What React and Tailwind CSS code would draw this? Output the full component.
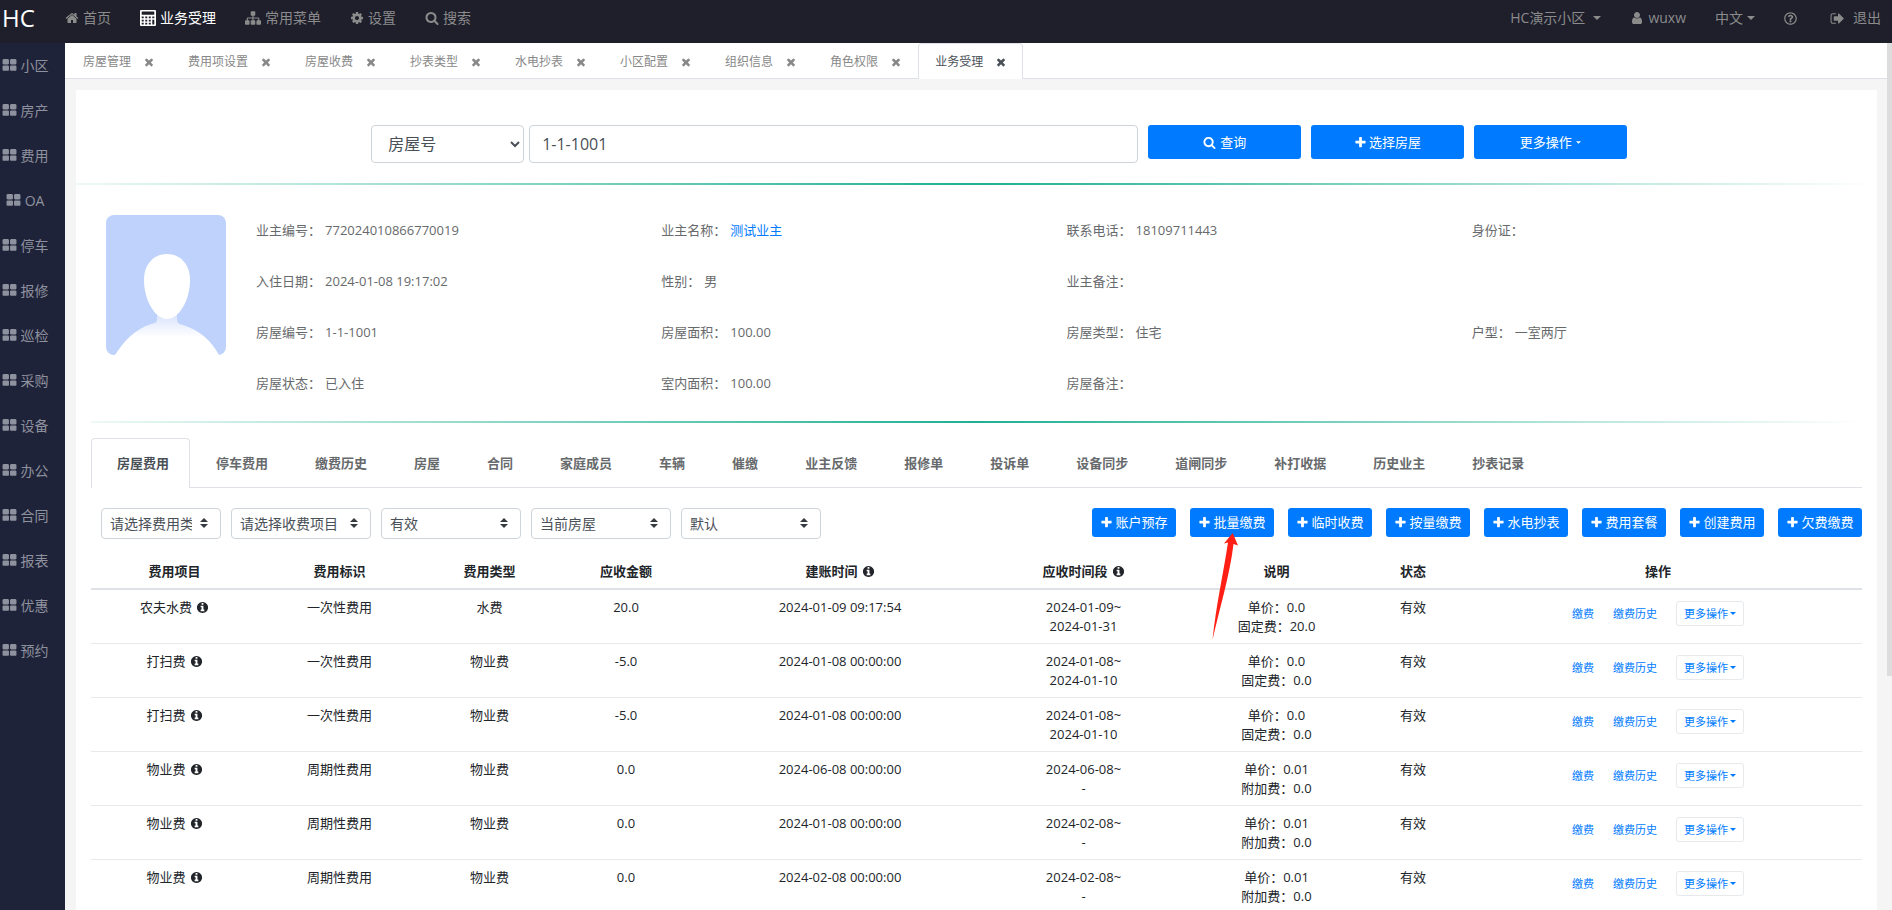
import { FaRegQuestionCircle } from 'react-icons/fa';

const iconPaths = {
  home: 'M1472 992v480q0 26-19 45t-45 19h-384v-384h-256v384h-384q-26 0-45-19t-19-45v-480q0-1 .5-3t.5-3l575-474 575 474q1 2 1 6zm223-69l-62 74q-8 9-21 11h-3q-13 0-21-7l-692-577-692 577q-12 8-24 7-13-2-21-11l-62-74q-8-10-7-23.5t11-21.5l719-599q32-26 76-26t76 26l244 204v-195q0-14 9-23t23-9h192q14 0 23 9t9 23v408l219 182q10 8 11 21.5t-7 23.5z',
  calculator:
    'M128 0h1536q52 0 90 38t38 90v1536q0 52-38 90t-90 38h-1536q-52 0-90-38t-38-90v-1536q0-52 38-90t90-38zM192 160v384h1408v-384zM192 736v192h224v-192zM588 736v192h224v-192zM984 736v192h224v-192zM1376 736v192h224v-192zM192 1088v192h224v-192zM588 1088v192h224v-192zM984 1088v192h224v-192zM1376 1088v544h224v-544zM192 1440v192h224v-192zM588 1440v192h224v-192zM984 1440v192h224v-192z',
  sitemap:
    'M1792 1248v320q0 40-28 68t-68 28h-320q-40 0-68-28t-28-68v-320q0-40 28-68t68-28h96v-192h-512v192h96q40 0 68 28t28 68v320q0 40-28 68t-68 28h-320q-40 0-68-28t-28-68v-320q0-40 28-68t68-28h96v-192h-512v192h96q40 0 68 28t28 68v320q0 40-28 68t-68 28h-320q-40 0-68-28t-28-68v-320q0-40 28-68t68-28h96v-192q0-52 38-90t90-38h512v-192h-96q-40 0-68-28t-28-68v-320q0-40 28-68t68-28h320q40 0 68 28t28 68v320q0 40-28 68t-68 28h-96v192h512q52 0 90 38t38 90v192h96q40 0 68 28t28 68z',
  cog: 'M1152 896q0-106-75-181t-181-75-181 75-75 181 75 181 181 75 181-75 75-181zm512-109v222q0 12-8 23t-20 13l-185 28q-19 54-39 91 35 50 107 138 10 12 10 25t-9 23q-27 37-99 108t-94 71q-12 0-26-9l-138-108q-44 23-91 38-16 136-29 186-7 28-36 28h-222q-14 0-24.5-8.5t-11.5-21.5l-28-184q-49-16-90-37l-141 107q-10 9-25 9-14 0-25-11-126-114-165-168-7-10-7-23 0-12 8-23 15-21 51-66.5t54-70.5q-27-50-41-99l-183-27q-13-2-21-12.5t-8-23.5v-222q0-12 8-23t19-13l186-28q14-46 39-92-40-57-107-138-10-12-10-24 0-10 9-23 26-36 98.5-107.5t94.5-71.5q13 0 26 10l138 107q44-23 91-38 16-136 29-186 7-28 36-28h222q14 0 24.5 8.5t11.5 21.5l28 184q49 16 90 37l142-107q9-9 24-9 13 0 25 10 129 119 165 170 7 8 7 22 0 12-8 23-15 21-51 66.5t-54 70.5q26 50 41 98l183 28q13 2 21 12.5t8 23.5z',
  search:
    'M1216 832q0-185-131.5-316.5t-316.5-131.5-316.5 131.5-131.5 316.5 131.5 316.5 316.5 131.5 316.5-131.5 131.5-316.5zm512 832q0 52-38 90t-90 38q-54 0-90-38l-343-342q-179 124-399 124-143 0-273.5-55.5t-225-150-150-225-55.5-273.5 55.5-273.5 150-225 225-150 273.5-55.5 273.5 55.5 225 150 150 225 55.5 273.5q0 220-124 399l343 343q37 37 37 90z',
  user: 'M1536 1399q0 109-62.5 187t-150.5 78h-854q-88 0-150.5-78t-62.5-187q0-85 8.5-160.5t31.5-152 58.5-131 94-89 134.5-34.5q131 128 313 128t313-128q76 0 134.5 34.5t94 89 58.5 131 31.5 152 8.5 160.5zm-256-887q0 159-112.5 271.5t-271.5 112.5-271.5-112.5-112.5-271.5 112.5-271.5 271.5-112.5 271.5 112.5 112.5 271.5z',
  signOut:
    'M704 1440q0 4 1 20t.5 26.5-3 23.5-10 19.5-20.5 6.5h-320q-119 0-203.5-84.5t-84.5-203.5v-704q0-119 84.5-203.5t203.5-84.5h320q13 0 22.5 9.5t9.5 22.5q0 4 1 20t.5 26.5-3 23.5-10 19.5-20.5 6.5h-320q-66 0-113 47t-47 113v704q0 66 47 113t113 47h312l11.5 1 11.5 3 8 5.5 7 9 2 13.5zm928-544q0 26-19 45l-544 544q-19 19-45 19t-45-19-19-45v-288h-448q-26 0-45-19t-19-45v-384q0-26 19-45t45-19h448v-288q0-26 19-45t45-19 45 19l544 544q19 19 19 45z',
  thLarge:
    'M832 1024v384q0 52-38 90t-90 38h-512q-52 0-90-38t-38-90v-384q0-52 38-90t90-38h512q52 0 90 38t38 90zM832 256v384q0 52-38 90t-90 38h-512q-52 0-90-38t-38-90v-384q0-52 38-90t90-38h512q52 0 90 38t38 90zM1728 1024v384q0 52-38 90t-90 38h-512q-52 0-90-38t-38-90v-384q0-52 38-90t90-38h512q52 0 90 38t38 90zM1728 256v384q0 52-38 90t-90 38h-512q-52 0-90-38t-38-90v-384q0-52 38-90t90-38h512q52 0 90 38t38 90z',
  times:
    'M1490 1322q0 40-28 68l-136 136q-28 28-68 28t-68-28l-294-294-294 294q-28 28-68 28t-68-28l-136-136q-28-28-28-68t28-68l294-294-294-294q-28-28-28-68t28-68l136-136q28-28 68-28t68 28l294 294 294-294q28-28 68-28t68 28l136 136q28 28 28 68t-28 68l-294 294 294 294q28 28 28 68z',
  plus: 'M1600 736v192q0 40-28 68t-68 28h-416v416q0 40-28 68t-68 28h-192q-40 0-68-28t-28-68v-416h-416q-40 0-68-28t-28-68v-192q0-40 28-68t68-28h416v-416q0-40 28-68t68-28h192q40 0 68 28t28 68v416h416q40 0 68 28t28 68z',
  info: 'M1152 1376v-160q0-14-9-23t-23-9h-96v-512q0-14-9-23t-23-9h-320q-14 0-23 9t-9 23v160q0 14 9 23t23 9h96v320h-96q-14 0-23 9t-9 23v160q0 14 9 23t23 9h448q14 0 23-9t9-23zm-128-896v-160q0-14-9-23t-23-9h-192q-14 0-23 9t-9 23v160q0 14 9 23t23 9h192q14 0 23-9t9-23zm640 416q0 209-103 385.5t-279.5 279.5-385.5 103-385.5-103-279.5-279.5-103-385.5 103-385.5 279.5-279.5 385.5-103 385.5 103 279.5 279.5 103 385.5z',
};

const Icon = ({ name, className }) => (
  <svg viewBox="0 0 1792 1792" fill="currentColor" fillRule="evenodd" aria-hidden="true" className={className}>
    <path d={iconPaths[name]} />
  </svg>
);

const Caret = ({ className }) => (
  <svg viewBox="0 0 8 4" fill="currentColor" aria-hidden="true" className={className}>
    <path d="M0 0h8L4 4z" />
  </svg>
);

const navItems = [
  { icon: 'home', label: '首页', size: 'size-[14px]' },
  { icon: 'calculator', label: '业务受理', size: 'size-4', active: true },
  { icon: 'sitemap', label: '常用菜单', size: 'size-4' },
  { icon: 'cog', label: '设置', size: 'size-[14px]' },
  { icon: 'search', label: '搜索', size: 'size-[14px]' },
];

const sideItems = ['小区', '房产', '费用', 'OA', '停车', '报修', '巡检', '采购', '设备', '办公', '合同', '报表', '优惠', '预约'];

const pageTabs = ['房屋管理', '费用项设置', '房屋收费', '抄表类型', '水电抄表', '小区配置', '组织信息', '角色权限', '业务受理'];

const ownerInfo = [
  ['业主编号', '772024010866770019'],
  ['业主名称', '测试业主', true],
  ['联系电话', '18109711443'],
  ['身份证', ''],
  ['入住日期', '2024-01-08 19:17:02'],
  ['性别', '男'],
  ['业主备注', ''],
  null,
  ['房屋编号', '1-1-1001'],
  ['房屋面积', '100.00'],
  ['房屋类型', '住宅'],
  ['户型', '一室两厅'],
  ['房屋状态', '已入住'],
  ['室内面积', '100.00'],
  ['房屋备注', ''],
];

const detailTabs = [
  '房屋费用', '停车费用', '缴费历史', '房屋', '合同', '家庭成员', '车辆', '催缴',
  '业主反馈', '报修单', '投诉单', '设备同步', '道闸同步', '补打收据', '历史业主', '抄表记录',
];

const filters = [
  { label: '费用类型', value: '请选择费用类型', width: 'w-[120px]' },
  { label: '收费项目', value: '请选择收费项目', width: 'w-[140px]' },
  { label: '状态', value: '有效', width: 'w-[140px]' },
  { label: '房屋', value: '当前房屋', width: 'w-[140px]' },
  { label: '排序', value: '默认', width: 'w-[140px]' },
];

const feeActions = ['账户预存', '批量缴费', '临时收费', '按量缴费', '水电抄表', '费用套餐', '创建费用', '欠费缴费'];

const columns = [
  { title: '费用项目', width: 'w-[167px]' },
  { title: '费用标识', width: 'w-[163px]' },
  { title: '费用类型', width: 'w-[137px]' },
  { title: '应收金额', width: 'w-[136px]' },
  { title: '建账时间', width: 'w-[292px]', info: true },
  { title: '应收时间段', width: 'w-[195px]', info: true },
  { title: '说明', width: 'w-[191px]' },
  { title: '状态', width: 'w-[82px]' },
  { title: '操作', width: 'w-[408px]' },
];

const fees = [
  { name: '农夫水费', flag: '一次性费用', type: '水费', amount: '20.0', created: '2024-01-09 09:17:54', start: '2024-01-09~', end: '2024-01-31', price: '单价：0.0', extra: '固定费：20.0' },
  { name: '打扫费', flag: '一次性费用', type: '物业费', amount: '-5.0', created: '2024-01-08 00:00:00', start: '2024-01-08~', end: '2024-01-10', price: '单价：0.0', extra: '固定费：0.0' },
  { name: '打扫费', flag: '一次性费用', type: '物业费', amount: '-5.0', created: '2024-01-08 00:00:00', start: '2024-01-08~', end: '2024-01-10', price: '单价：0.0', extra: '固定费：0.0' },
  { name: '物业费', flag: '周期性费用', type: '物业费', amount: '0.0', created: '2024-06-08 00:00:00', start: '2024-06-08~', end: '-', price: '单价：0.01', extra: '附加费：0.0' },
  { name: '物业费', flag: '周期性费用', type: '物业费', amount: '0.0', created: '2024-01-08 00:00:00', start: '2024-02-08~', end: '-', price: '单价：0.01', extra: '附加费：0.0' },
  { name: '物业费', flag: '周期性费用', type: '物业费', amount: '0.0', created: '2024-02-08 00:00:00', start: '2024-02-08~', end: '-', price: '单价：0.01', extra: '附加费：0.0' },
];

const TopNav = () => (
  <header className="flex h-[43px] shrink-0 justify-between bg-[#1e1f2b] text-sm text-[#8b8b8b]">
    <div className="flex h-9 items-center">
      <a href="#home" className="w-[65px] pl-[2px] text-2xl leading-9 text-white">HC</a>
      <nav className="flex items-center gap-[29px]">
        {navItems.map((item) => (
          <a
            key={item.label}
            href={`#${item.icon}`}
            className={`flex items-center gap-1 whitespace-nowrap ${item.active ? 'text-white' : ''}`}
          >
            <Icon name={item.icon} className={item.size} />
            {item.label}
          </a>
        ))}
      </nav>
    </div>
    <div className="flex h-9 items-center gap-[29px] pr-[11px] whitespace-nowrap">
      <button type="button" className="flex items-center gap-2">
        HC演示小区
        <Caret className="h-1 w-2" />
      </button>
      <a href="#user" className="flex items-center gap-1">
        <Icon name="user" className="size-[14px]" />
        wuxw
      </a>
      <button type="button" className="flex items-center gap-1">
        中文
        <Caret className="h-1 w-2" />
      </button>
      <a href="#help" aria-label="帮助">
        <FaRegQuestionCircle className="size-[13px]" />
      </a>
      <a href="#logout" className="ml-1 flex items-center gap-2">
        <Icon name="signOut" className="size-[15px]" />
        退出
      </a>
    </div>
  </header>
);

const Sidebar = () => (
  <aside className="w-[65px] shrink-0 bg-[#1f2339] text-sm text-[#8e919e]">
    <nav className="flex w-[50px] flex-col">
      {sideItems.map((label) => (
        <a key={label} href={`#${label}`} className="flex h-[45px] items-center justify-center gap-1 whitespace-nowrap">
          <Icon name="thLarge" className="size-[15px]" />
          {label}
        </a>
      ))}
    </nav>
  </aside>
);

const PageTabs = () => (
  <div className="flex h-9 shrink-0 border-b border-[#dee2e6] bg-white pl-px text-xs">
    {pageTabs.map((label, index) => {
      const active = index === pageTabs.length - 1;
      return (
        <div
          key={label}
          className={`-mb-px flex items-center gap-3 rounded-t border border-b-0 pr-[15px] pl-4 whitespace-nowrap ${
            active ? 'border-[#dee2e6] bg-white text-[#495057]' : 'border-transparent text-[#888888]'
          }`}
        >
          <a href={`#${label}`}>{label}</a>
          <button type="button" aria-label={`关闭${label}`}>
            <Icon name="times" className="size-3" />
          </button>
        </div>
      );
    })}
  </div>
);

const SearchBar = () => (
  <div className="grid grid-cols-[153fr_605fr_153fr_153fr_153fr] items-start gap-x-[10px] pt-[35px] pr-[13.9%] pb-5 pl-[16.4%]">
    <select
      aria-label="查询条件"
      className="h-[38px] rounded border border-[#ced4da] bg-white px-3 text-base text-[#495057]"
    >
      <option>房屋号</option>
    </select>
    <input
      aria-label="房屋号"
      defaultValue="1-1-1001"
      className="-ml-[5px] h-[38px] rounded border border-[#ced4da] bg-white px-3 text-base text-[#495057]"
    />
    <button type="button" className="flex h-[34px] items-center justify-center gap-1 rounded-[3px] bg-[#007bff] text-[13px] text-white">
      <Icon name="search" className="size-[13px]" />
      查询
    </button>
    <button type="button" className="flex h-[34px] items-center justify-center gap-[2px] rounded-[3px] bg-[#007bff] text-[13px] text-white">
      <Icon name="plus" className="size-[13px]" />
      选择房屋
    </button>
    <button type="button" className="flex h-[34px] items-center justify-center gap-1 rounded-[3px] bg-[#007bff] text-[13px] text-white">
      更多操作
      <Caret className="h-[3px] w-[5px]" />
    </button>
  </div>
);

const Divider = () => <div className="h-[2px] bg-linear-to-r/srgb from-[#edf9f6] via-[#1fb092] to-white" />;

const Avatar = () => (
  <svg viewBox="0 0 120 140" className="h-[140px] w-[120px] shrink-0 rounded-lg" role="img" aria-label="业主照片">
    <defs>
      <linearGradient id="avatar-body" x1="0" y1="0" x2="0" y2="1">
        <stop offset="0" stopColor="#d3dffb" />
        <stop offset="0.6" stopColor="#ffffff" />
      </linearGradient>
    </defs>
    <rect width="120" height="140" fill="#bed2fb" />
    <path
      d="M51 96h20v8c0 4 2 5 6 6 17 5 29 17 36 30H9c8-13 20-26 36-31 4-1 6-1 6-5z"
      fill="url(#avatar-body)"
    />
    <path d="M61 39c14 0 23 11 23 26 0 20-11 39-23 39S38 85 38 65c0-15 9-26 23-26z" fill="#ffffff" />
  </svg>
);

const OwnerInfo = () => (
  <section className="flex pt-5 pr-[15px] pb-3 pl-[30px]">
    <div className="pt-[10px]">
      <Avatar />
    </div>
    <dl className="grid flex-1 grid-cols-4 pl-[15px] text-[#676a6c]">
      {ownerInfo.map((item, index) => (
        <div key={index} className="flex h-[51px] items-center gap-1 px-[15px]">
          {item && <dt>{item[0]}：</dt>}
          {item && <dd>{item[2] ? <a href="#owner" className="text-[#007bff]">{item[1]}</a> : item[1]}</dd>}
        </div>
      ))}
    </dl>
  </section>
);

const DetailTabs = () => (
  <div className="mt-[15px] flex h-[50px] border-b border-[#dee2e6] font-semibold">
    {detailTabs.map((label, index) => (
      <a
        key={label}
        href={`#${label}`}
        className={`-mb-px flex items-center rounded-t border border-b-0 pr-5 pl-[25px] whitespace-nowrap ${
          index === 0 ? 'border-[#dee2e6] bg-white text-[#495057]' : 'border-transparent text-[#676a6c]'
        }`}
      >
        {label}
      </a>
    ))}
  </div>
);

const Toolbar = () => (
  <div className="flex items-start justify-between pt-5 pb-[14px] pl-[10px]">
    <div className="flex gap-[10px]">
      {filters.map((filter) => (
        <div key={filter.label} className={`relative ${filter.width}`}>
          <select
            aria-label={filter.label}
            className="h-[31px] w-full appearance-none rounded border border-[#ced4da] bg-white pr-7 pl-2 text-sm text-[#495057]"
          >
            <option>{filter.value}</option>
          </select>
          <svg
            viewBox="0 0 4 5"
            aria-hidden="true"
            className="pointer-events-none absolute top-[10px] right-[13px] h-[10px] w-2"
          >
            <path fill="#343a40" d="M2 0L0 2h4zm0 5L0 3h4z" />
          </svg>
        </div>
      ))}
    </div>
    <div className="flex gap-[14px]">
      {feeActions.map((label) => (
        <div key={label} className="relative">
          <button type="button" className="flex h-[29px] w-[84px] items-center justify-center gap-[2px] rounded-[3px] bg-[#007bff] whitespace-nowrap text-white">
            <Icon name="plus" className="size-[13px]" />
            {label}
          </button>
          {label === '批量缴费' && (
            <svg viewBox="0 0 26 108" aria-hidden="true" className="pointer-events-none absolute top-[25px] left-[22px] z-10 h-[108px] w-[26px]">
              <path fill="#ff1f14" d="M20.700 0L26 12.500 21.500 11C18 42 7 77 .500 107 4 73 11 42 16 9.500L12 10.500z" />
            </svg>
          )}
        </div>
      ))}
    </div>
  </div>
);

const InfoIcon = () => <Icon name="info" className="ml-1 inline-block size-[13px] align-[-2px]" />;

const FeeTable = () => (
  <table className="w-full table-fixed border-separate border-spacing-0 text-center text-[#212529]">
    <thead>
      <tr>
        {columns.map((column) => (
          <th
            key={column.title}
            scope="col"
            className={`border-b-2 border-[#dee2e6] pt-[9px] pb-[7px] font-semibold ${column.width}`}
          >
            {column.title}
            {column.info && <InfoIcon />}
          </th>
        ))}
      </tr>
    </thead>
    <tbody className="align-top">
      {fees.map((fee, index) => (
        <tr key={index} className="[&>td]:border-b [&>td]:border-[#e7eaec] [&>td]:pt-2 [&>td]:pb-[7px]">
          <td>
            {fee.name}
            <InfoIcon />
          </td>
          <td>{fee.flag}</td>
          <td>{fee.type}</td>
          <td>{fee.amount}</td>
          <td>{fee.created}</td>
          <td>
            {fee.start}
            <br />
            {fee.end}
          </td>
          <td>
            {fee.price}
            <br />
            {fee.extra}
          </td>
          <td>有效</td>
          <td>
            <div className="mt-[3px] flex items-center justify-center gap-[19px] text-[11px] text-[#007bff]">
              <a href="#pay">缴费</a>
              <a href="#history">缴费历史</a>
              <button type="button" className="flex h-[25px] w-[68px] items-center justify-center gap-[2px] rounded-[3px] border border-[#e7eaec] bg-white">
                更多操作
                <Caret className="h-[3px] w-[6px]" />
              </button>
            </div>
          </td>
        </tr>
      ))}
    </tbody>
  </table>
);

const App = () => (
  <div className="flex h-screen flex-col overflow-hidden bg-[#f5f5f5] font-['Open_Sans','Noto_Sans_CJK_SC',sans-serif] text-[13px] leading-[19px]">
    <TopNav />
    <div className="flex min-h-0 flex-1">
      <Sidebar />
      <div className="flex min-w-0 flex-1">
        <div className="flex min-w-0 flex-1 flex-col">
          <PageTabs />
          <main className="min-h-0 flex-1 overflow-hidden pt-[11px] pr-[10px] pl-[11px]">
            <div className="bg-white">
              <SearchBar />
              <Divider />
              <OwnerInfo />
              <div className="px-[15px]">
                <Divider />
                <DetailTabs />
                <Toolbar />
                <FeeTable />
              </div>
            </div>
          </main>
        </div>
        {/* scroll track */}
        <div className="w-[5px] shrink-0 bg-[#f5f5f5]">
          <div className="h-[73%] bg-[#dddddd]" />
        </div>
      </div>
    </div>
  </div>
);

export default App;
